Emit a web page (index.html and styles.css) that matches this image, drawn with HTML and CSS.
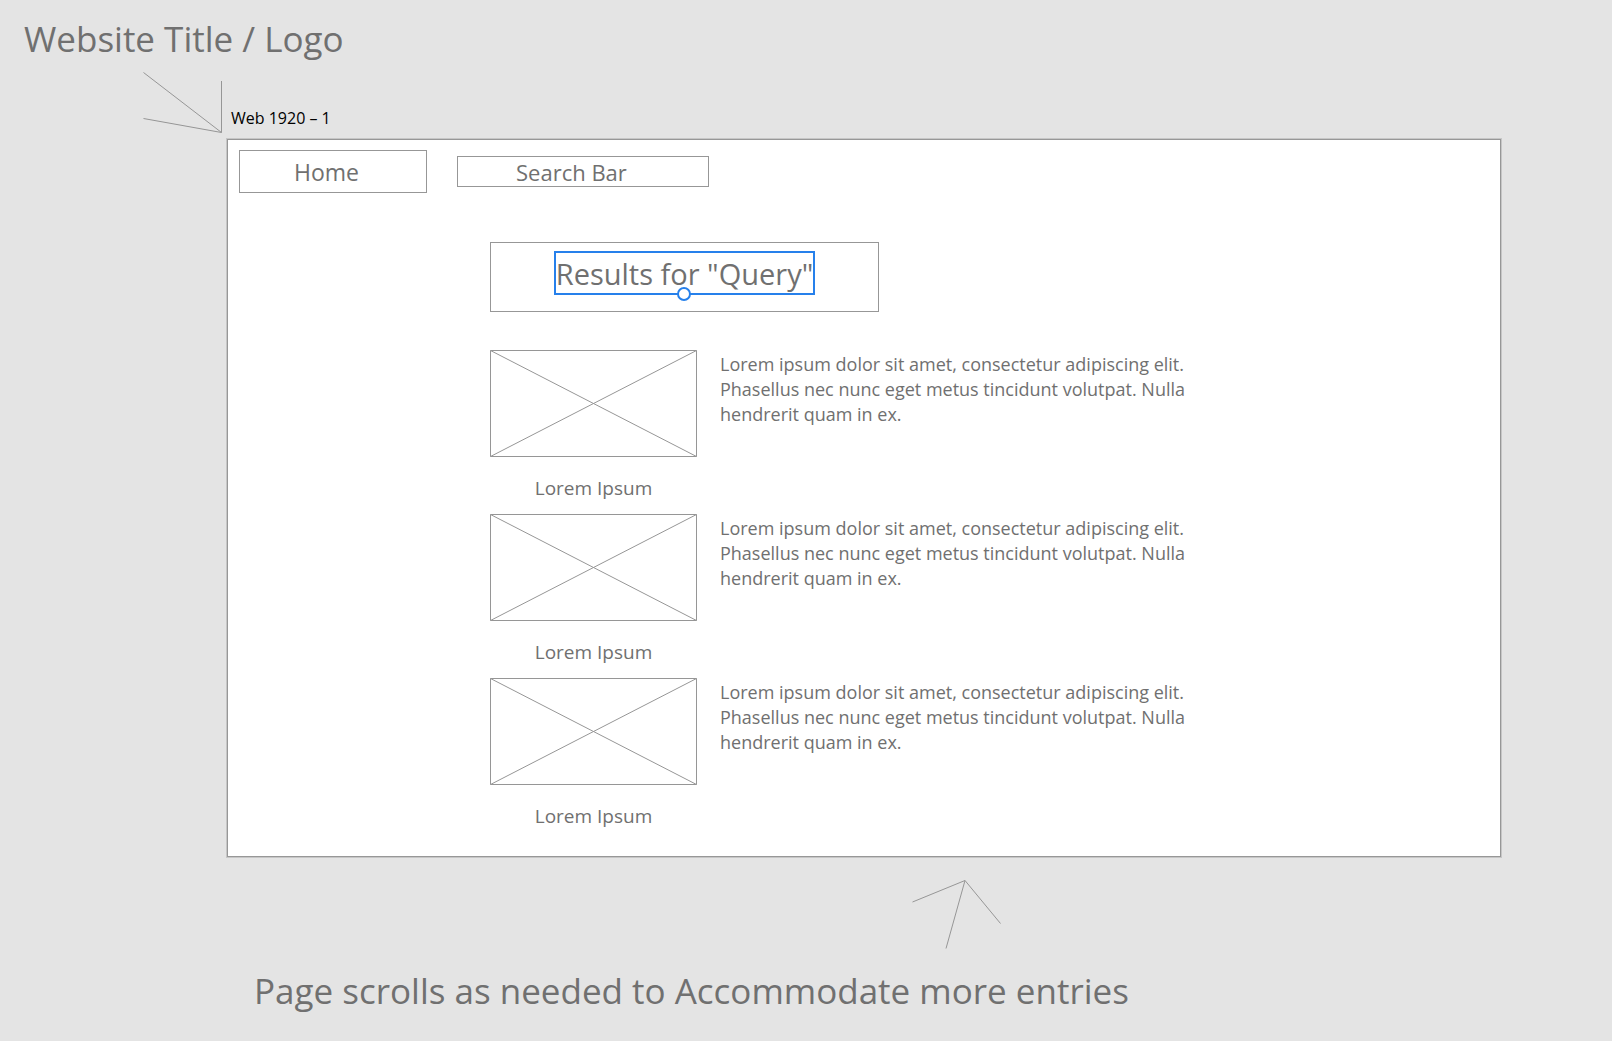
FILE: index.html
```html
<!DOCTYPE html>
<html lang="en">
<head>
<meta charset="utf-8">
<meta name="viewport" content="width=device-width, initial-scale=1">
<title>Web 1920 – 1</title>
<link rel="stylesheet" href="styles.css">
</head>
<body>
<header class="note note-top">Website Title / Logo</header>
<div class="board-head">
  <svg class="arrow" width="80" height="62" viewBox="0 0 80 62" aria-hidden="true"><path d="M0.500 0.500 78.500 60.500M0.500 46.500 78.500 60.500V9"/></svg>
  <h2 class="board-label">Web 1920 – 1</h2>
</div>
<main class="board">
  <nav class="toolbar">
    <a class="home" href="#">Home</a>
    <input class="search" type="search" value="Search Bar" aria-label="Search">
  </nav>
  <div class="content">
    <div class="results">
      <h1 class="selected">Results for "Query"<span class="handle"></span></h1>
    </div>
    <article class="entry">
      <figure class="figure">
        <svg class="picture" viewBox="0 0 207 107" aria-hidden="true"><path d="M0.500 0.500h206v106h-206zL206.500 106.500M206.500 0.500 0.500 106.500"/></svg>
        <figcaption class="caption">Lorem Ipsum</figcaption>
      </figure>
      <p class="text">Lorem ipsum dolor sit amet, consectetur adipiscing elit. Phasellus nec nunc eget metus tincidunt volutpat. Nulla hendrerit quam in ex.</p>
    </article>
    <article class="entry">
      <figure class="figure">
        <svg class="picture" viewBox="0 0 207 107" aria-hidden="true"><path d="M0.500 0.500h206v106h-206zL206.500 106.500M206.500 0.500 0.500 106.500"/></svg>
        <figcaption class="caption">Lorem Ipsum</figcaption>
      </figure>
      <p class="text">Lorem ipsum dolor sit amet, consectetur adipiscing elit. Phasellus nec nunc eget metus tincidunt volutpat. Nulla hendrerit quam in ex.</p>
    </article>
    <article class="entry">
      <figure class="figure">
        <svg class="picture" viewBox="0 0 207 107" aria-hidden="true"><path d="M0.500 0.500h206v106h-206zL206.500 106.500M206.500 0.500 0.500 106.500"/></svg>
        <figcaption class="caption">Lorem Ipsum</figcaption>
      </figure>
      <p class="text">Lorem ipsum dolor sit amet, consectetur adipiscing elit. Phasellus nec nunc eget metus tincidunt volutpat. Nulla hendrerit quam in ex.</p>
    </article>
  </div>
</main>
<footer class="board-foot">
  <svg class="arrow arrow-up" width="90" height="70" viewBox="0 0 90 70" aria-hidden="true"><path d="M0.500 22 53 0.500 34 68.500M53 0.500 88.500 43.500"/></svg>
  <p class="note">Page scrolls as needed to Accommodate more entries</p>
</footer>
</body>
</html>
```
FILE: styles.css
```css
* {
  box-sizing: border-box;
}

body {
  margin: 0;
  background: #e4e4e4;
  color: #707070;
  font-family: "Open Sans", "Noto Sans", sans-serif;
}

h1, h2, p, figure {
  margin: 0;
  font-weight: 400;
}

.note {
  font-size: 35px;
  line-height: 48px;
}

.note-top {
  padding: 15px 24px 9px;
}

/* Arrow and name above the artboard */
.board-head {
  display: flex;
  align-items: flex-end;
  gap: 8px;
  padding: 0 0 5px 143px;
}

.board-label {
  padding-bottom: 4px;
  color: #000;
  font-size: 16px;
  line-height: 24px;
}

.arrow,
.picture {
  display: block;
  fill: none;
  stroke: #969696;
}

.board {
  margin: 0 111px 0 227px;
  padding: 10px 11px 14px;
  border: 1px solid #979797;
  box-shadow: 0 0 0 1px #c6c6c6;
  background: #fff;
}

.toolbar {
  display: flex;
  align-items: center;
  gap: 30px;
}

.home,
.search {
  border: 1px solid #979797;
  background: #fff;
  color: #707070;
  text-decoration: none;
}

.home {
  width: 188px;
  padding: 2px 54px 0;
  font-size: 23px;
  line-height: 39px;
}

.search {
  width: 252px;
  height: 31px;
  margin: 0;
  padding: 0 58px;
  border-radius: 0;
  outline: 0;
  font-family: inherit;
  font-size: 22px;
  line-height: 29px;
  appearance: none;
}

.content {
  padding: 49px 0 0 251px;
}

.results {
  display: flex;
  align-items: flex-start;
  justify-content: center;
  width: 389px;
  height: 70px;
  margin-bottom: 38px;
  padding-top: 8px;
  border: 1px solid #979797;
}

/* Text layer with its selection outline and resize handle */
.selected {
  position: relative;
  padding-top: 2px;
  border: 2px solid #2680eb;
  font-size: 29px;
  line-height: 38px;
}

.handle {
  position: absolute;
  bottom: -8px;
  left: 50%;
  width: 14px;
  height: 14px;
  margin-left: -7px;
  border: 2px solid #2680eb;
  border-radius: 50%;
  background: #fff;
}

.entry {
  display: flex;
  gap: 23px;
}

.figure {
  flex: none;
  width: 207px;
}

.picture {
  width: 100%;
}

.caption {
  padding: 17px 0 12px;
  font-size: 19px;
  line-height: 28px;
  text-align: center;
}

.text {
  max-width: 480px;
  padding-top: 2px;
  font-size: 18px;
  line-height: 25px;
}

.board-foot {
  padding: 23px 111px 13px 254px;
}

.arrow-up {
  margin: 0 0 17px 658px;
}
```
